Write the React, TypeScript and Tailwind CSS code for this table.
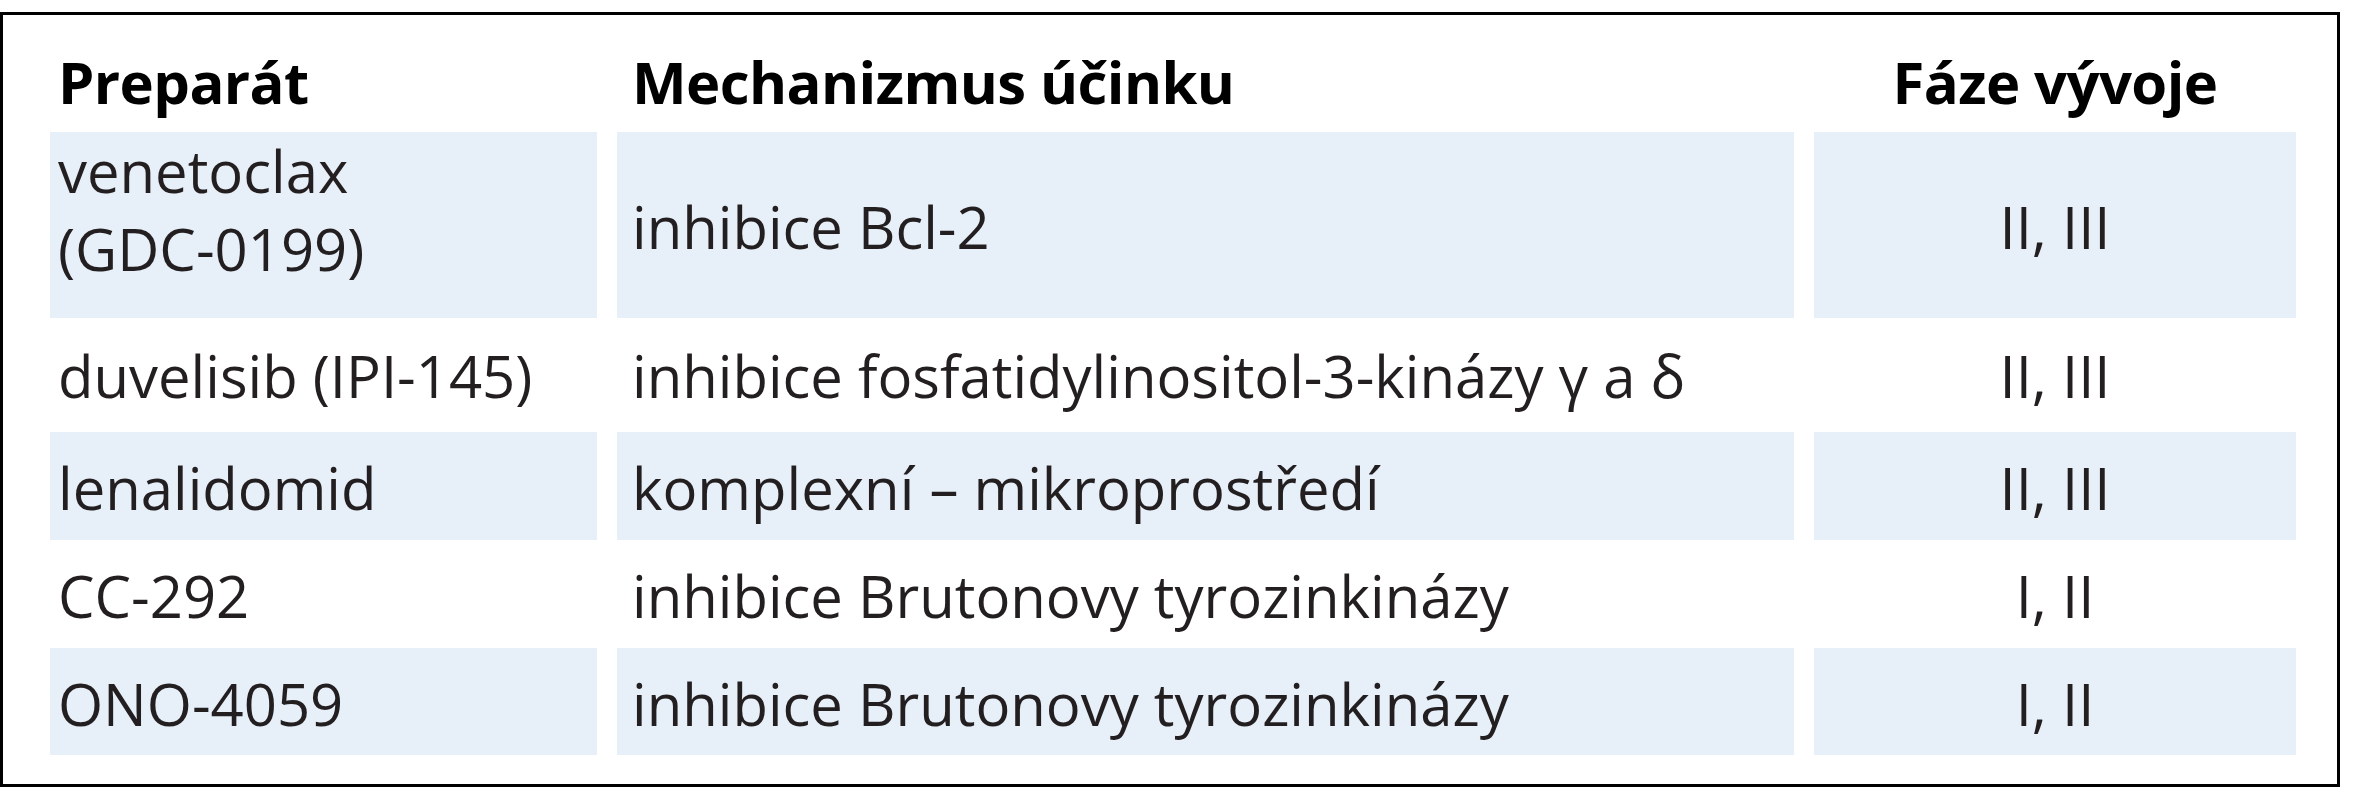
type Row = {
  drug: string[]
  mechanism: string
  phase: string
  shaded: boolean
  pad: string
  drugPad: string
}

const rows: Row[] = [
  {
    drug: ["venetoclax", "(GDC-0199)"],
    mechanism: "inhibice Bcl-2",
    phase: "II, III",
    shaded: true,
    pad: "pt-[17px] pb-[13px]",
    drugPad: "pt-[0px] pb-[30px]",
  },
  {
    drug: ["duvelisib (IPI-145)"],
    mechanism: "inhibice fosfatidylinositol-3-kinázy γ a δ",
    phase: "II, III",
    shaded: false,
    pad: "pt-[19px] pb-[17px]",
    drugPad: "pt-[19px] pb-[17px]",
  },
  {
    drug: ["lenalidomid"],
    mechanism: "komplexní – mikroprostředí",
    phase: "II, III",
    shaded: true,
    pad: "pt-[17px] pb-[13px]",
    drugPad: "pt-[17px] pb-[13px]",
  },
  {
    drug: ["CC-292"],
    mechanism: "inhibice Brutonovy tyrozinkinázy",
    phase: "I, II",
    shaded: false,
    pad: "pt-[17px] pb-[13px]",
    drugPad: "pt-[17px] pb-[13px]",
  },
  {
    drug: ["ONO-4059"],
    mechanism: "inhibice Brutonovy tyrozinkinázy",
    phase: "I, II",
    shaded: true,
    pad: "pt-[17px] pb-[12px]",
    drugPad: "pt-[17px] pb-[12px]",
  },
]

export default function App() {
  return (
    <div className="min-h-[800px] w-[2355px] bg-white pt-[12px] font-['Open_Sans',sans-serif] text-[58px] leading-[78px] text-[#231f20]">
      <div className="w-[2340px] border-[3px] border-black pl-[47px] pb-[29px]">
        <div className="grid grid-cols-[547px_1177px_482px] gap-x-[20px]">
          {/* header */}
          <div className="pl-[8px] pt-[28px] pb-[11px] font-bold tracking-[-0.01em] text-black">Preparát</div>
          <div className="pl-[15px] pt-[28px] pb-[11px] font-bold tracking-[-0.01em] text-black">Mechanizmus účinku</div>
          <div className="pt-[28px] pb-[11px] text-center font-bold tracking-[-0.01em] text-black">Fáze vývoje</div>

          {rows.map((r) => (
            <Cells key={r.drug.join(" ")} row={r} />
          ))}
        </div>
      </div>
    </div>
  )
}

function Cells({ row }: { row: Row }) {
  const bg = row.shaded ? "bg-[#e7eff9]" : "bg-white"
  return (
    <>
      <div className={`${bg} ${row.drugPad} pl-[8px]`}>
        {row.drug.map((d) => (
          <div key={d}>{d}</div>
        ))}
      </div>
      <div className={`${bg} ${row.pad} flex items-center pl-[15px]`}>{row.mechanism}</div>
      <div className={`${bg} ${row.pad} flex items-center justify-center`}>{row.phase}</div>
    </>
  )
}
